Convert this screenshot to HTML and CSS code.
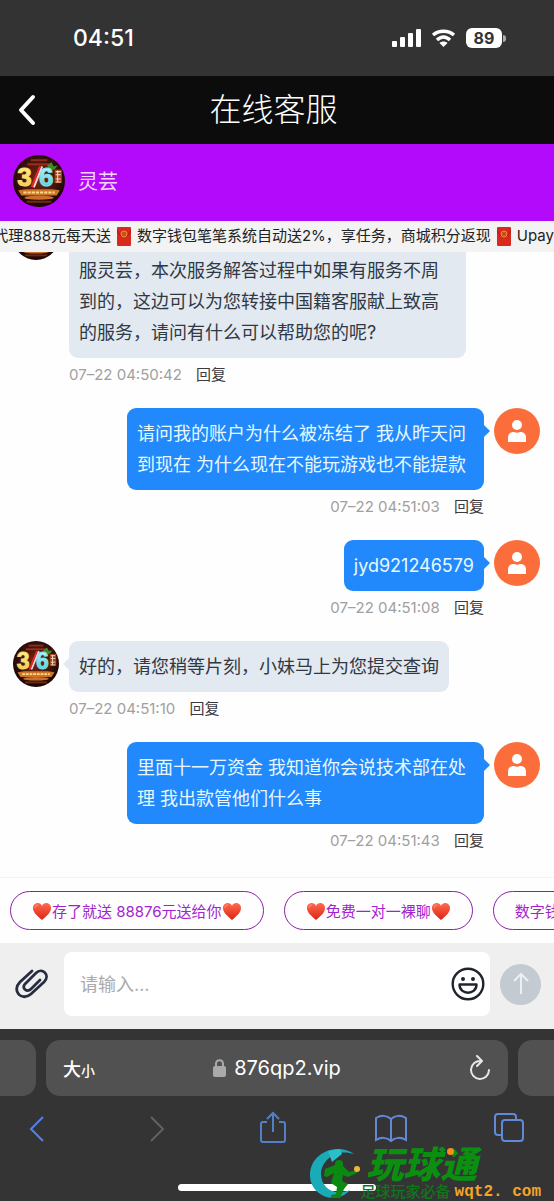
FILE: index.html
```html
<!DOCTYPE html>
<html lang="zh">
<head>
    <meta charset="UTF-8">
    <meta name="viewport" content="width=device-width, initial-scale=1.0">
    <title>在线客服</title>
    <link rel="stylesheet" href="styles.css">
</head>
<body>

    <!-- 公用图形 -->
    <svg class="defs" width="0" height="0" aria-hidden="true">
        <defs>
            <radialGradient id="logoBg" cx="50%" cy="45%" r="55%">
                <stop offset="0" stop-color="#7a2a12"/>
                <stop offset="0.6" stop-color="#43140c"/>
                <stop offset="1" stop-color="#170606"/>
            </radialGradient>
            <linearGradient id="gold" x1="0" y1="0" x2="0" y2="1">
                <stop offset="0" stop-color="#fff7b0"/>
                <stop offset="1" stop-color="#ecc43a"/>
            </linearGradient>
            <linearGradient id="ice" x1="0" y1="0" x2="0" y2="1">
                <stop offset="0" stop-color="#d8fbff"/>
                <stop offset="1" stop-color="#35c4dc"/>
            </linearGradient>
            <linearGradient id="heartBg" x1="0" y1="0" x2="0" y2="1">
                <stop offset="0" stop-color="#ff6a4d"/>
                <stop offset="1" stop-color="#dc2414"/>
            </linearGradient>
        </defs>
        <symbol id="logo" viewBox="0 0 50 50">
            <circle cx="25" cy="25" r="25" fill="url(#logoBg)"/>
            <path d="M17 5h16" stroke="#8a2c20" stroke-width="2"/>
            <path d="M14 9h22" stroke="#a02c20" stroke-width="2"/>
            <path d="M33 10l4-3 2 4 4-1-3 4-6 1z" fill="#3d8b2c"/>
            <path d="M28 11L20 31" stroke="#f2e0d8" stroke-width="2"/>
            <path d="M26 11L18 31" stroke="#e8262a" stroke-width="2"/>
            <text class="logo-num" x="4" y="30" fill="url(#gold)" stroke="#f7dc6a">3</text>
            <text class="logo-num" x="25" y="30" fill="url(#ice)" stroke="#7fe4f0">6</text>
            <path d="M40 14h7v13h-7z" fill="#a0401c"/>
            <path d="M41 16h5M41 19h5M43 15v11M41 23h5M41 26h5" stroke="#f3dcc0" stroke-width="1"/>
            <path d="M5 34l7-1h26l7 1-3 5H8z" fill="#cc7428"/>
            <path d="M10 36h30" stroke="#ffd68a" stroke-width="2" stroke-dasharray="3 1"/>
            <ellipse cx="25" cy="41" rx="14" ry="2" fill="#c8702c"/>
            <path d="M13 45h24" stroke="#6d2b12" stroke-width="2"/>
        </symbol>
        <symbol id="user" viewBox="0 0 46 46">
            <circle cx="23" cy="23" r="23" fill="#fb6e3b"/>
            <circle cx="23" cy="17" r="5" fill="#fff"/>
            <path d="M14 34v-4c0-4 2-6 6-6 2 1 4 1 6 0 4 0 6 2 6 6v4z" fill="#fff"/>
        </symbol>
        <symbol id="heart" viewBox="0 0 20 20">
            <path d="M10 19C4 14 1 11 1 7c0-5 7-7 9-2 2-5 9-3 9 2 0 4-3 7-9 12z" fill="url(#heartBg)"/>
            <path d="M3 7c0-2 1-3 3-3" fill="none" stroke="#ff9a82" stroke-width="1"/>
        </symbol>
        <symbol id="packet" viewBox="0 0 14 19">
            <rect width="14" height="19" rx="1" fill="#d9281e"/>
            <path d="M0 3c3 9 11 9 14 0" fill="none" stroke="#a51510" stroke-width="1"/>
            <circle cx="7" cy="7" r="3" fill="#c8501c" stroke="#f09030" stroke-width="1"/>
        </symbol>
    </svg>

    <div class="status">
        <span class="time">04:51</span>
        <div class="status-icons">
            <svg width="29" height="18" viewBox="0 0 29 18" fill="#fff">
                <rect x="0" y="12" width="5" height="6" rx="1"/>
                <rect x="8" y="8" width="5" height="10" rx="1"/>
                <rect x="16" y="4" width="5" height="14" rx="1"/>
                <rect x="24" y="0" width="5" height="18" rx="1"/>
            </svg>
            <svg width="25" height="18" viewBox="0 0 25 18">
                <path d="M2 6c6-5 15-5 21 0M6 11c4-4 9-4 13 0" fill="none" stroke="#fff" stroke-width="3.400"/>
                <path d="M8.500 14c2-2 6-2 8 0l-4 4z" fill="#fff"/>
            </svg>
            <div class="battery">89</div>
        </div>
    </div>

    <header class="title-bar">
        <button class="back" aria-label="返回">
            <svg width="20" height="32" viewBox="0 0 20 32"><path d="M16 3L4 16l12 13" fill="none" stroke="#fff" stroke-width="4" stroke-linecap="round" stroke-linejoin="round"/></svg>
        </button>
        <h1>在线客服</h1>
    </header>

    <div class="agent">
        <svg class="agent-logo"><use href="#logo"/></svg>
        <span>灵芸</span>
    </div>

    <div class="notice">
        <div class="notice-text">代理888元每天送<svg class="packet"><use href="#packet"/></svg>数字钱包笔笔系统自动送2%，享任务，商城积分返现<svg class="packet"><use href="#packet"/></svg>Upay</div>
    </div>

    <main class="chat">
        <div class="msg">
            <svg class="avatar"><use href="#logo"/></svg>
            <div class="msg-body">
                <div class="bubble"><br>服灵芸，本次服务解答过程中如果有服务不周到的，这边可以为您转接中国籍客服献上致高的服务，请问有什么可以帮助您的呢?</div>
                <div class="meta">07–22 04:50:42 <button class="reply">回复</button></div>
            </div>
        </div>
        <div class="msg mine">
            <svg class="avatar"><use href="#user"/></svg>
            <div class="msg-body">
                <div class="bubble">请问我的账户为什么被冻结了 我从昨天问到现在 为什么现在不能玩游戏也不能提款</div>
                <div class="meta">07–22 04:51:03 <button class="reply">回复</button></div>
            </div>
        </div>
        <div class="msg mine">
            <svg class="avatar"><use href="#user"/></svg>
            <div class="msg-body">
                <div class="bubble">jyd921246579</div>
                <div class="meta">07–22 04:51:08 <button class="reply">回复</button></div>
            </div>
        </div>
        <div class="msg">
            <svg class="avatar"><use href="#logo"/></svg>
            <div class="msg-body">
                <div class="bubble">好的，请您稍等片刻，小妹马上为您提交查询</div>
                <div class="meta">07–22 04:51:10 <button class="reply">回复</button></div>
            </div>
        </div>
        <div class="msg mine">
            <svg class="avatar"><use href="#user"/></svg>
            <div class="msg-body">
                <div class="bubble">里面十一万资金 我知道你会说技术部在处理 我出款管他们什么事</div>
                <div class="meta">07–22 04:51:43 <button class="reply">回复</button></div>
            </div>
        </div>
    </main>

    <div class="quick">
        <button class="chip"><svg class="heart"><use href="#heart"/></svg>存了就送 88876元送给你<svg class="heart"><use href="#heart"/></svg></button>
        <button class="chip"><svg class="heart"><use href="#heart"/></svg>免费一对一裸聊<svg class="heart"><use href="#heart"/></svg></button>
        <button class="chip">数字钱包</button>
    </div>

    <div class="composer">
        <button class="attach" aria-label="附件">
            <svg width="34" height="32" viewBox="0 0 34 32"><path d="M17 3L5 14c-9 9 2 20 11 12L29 14c7-7-2-15-8-9L10 16c-4 4 2 9 6 5l9-9" fill="none" stroke="#272d40" stroke-width="2.800" stroke-linecap="round" stroke-linejoin="round"/></svg>
        </button>
        <div class="field">
            <input type="text" placeholder="请输入..." aria-label="请输入">
            <button class="smile" aria-label="表情">
                <svg width="34" height="34" viewBox="0 0 34 34">
                    <circle cx="17" cy="17" r="15.300" fill="none" stroke="#20242e" stroke-width="2.400"/>
                    <circle cx="12" cy="12" r="2" fill="#20242e"/>
                    <circle cx="22" cy="12" r="2" fill="#20242e"/>
                    <path d="M8.500 17.500h17c0 11-17 11-17 0z" fill="none" stroke="#20242e" stroke-width="2.400" stroke-linejoin="round"/>
                </svg>
            </button>
        </div>
        <button class="send" aria-label="发送">
            <svg width="20" height="24" viewBox="0 0 20 24"><path d="M10 22V3M3 9l7-7 7 7" fill="none" stroke="#edf0f3" stroke-width="2"/></svg>
        </button>
    </div>

    <footer class="browser">
        <div class="tabs">
            <div class="tab-edge left"></div>
            <div class="address">
                <button class="text-size" aria-label="大小">大<small>小</small></button>
                <div class="url">
                    <svg width="13" height="18" viewBox="0 0 13 18"><path d="M3 8V5c0-5 7-5 7 0v3" fill="none" stroke="#aaa" stroke-width="2"/><rect y="7" width="13" height="11" rx="2" fill="#aaa"/></svg>
                    <span>876qp2.vip</span>
                </div>
                <button class="reload" aria-label="刷新">
                    <svg width="22" height="26" viewBox="0 0 22 26"><path d="M12 6a9 9 0 1 0 8 9M8 1l5 5-5 5" fill="none" stroke="#e8e8e8" stroke-width="2" stroke-linecap="round" stroke-linejoin="round"/></svg>
                </button>
            </div>
            <div class="tab-edge right"></div>
        </div>
        <nav class="tools">
            <button aria-label="后退"><svg width="30" height="34" viewBox="0 0 30 34"><path d="M21 6L9 18l12 12" stroke="#5280ed"/></svg></button>
            <button aria-label="前进"><svg width="30" height="34" viewBox="0 0 30 34"><path d="M12 6l12 12-12 12" stroke="#626262"/></svg></button>
            <button aria-label="分享"><svg width="32" height="34" viewBox="0 0 32 34"><path d="M11 11H7q-2 0-2 2v16q0 2 2 2h20q2 0 2-2V13q0-2-2-2h-4M17 21V2M11 8l6-6 6 6" stroke="#5280c8"/></svg></button>
            <button aria-label="书签"><svg width="32" height="34" viewBox="0 0 32 34"><path d="M16 8v22M16 8C12 4 6 4 1 7v22c5-3 11-3 15 1 4-4 10-4 15-1V7c-5-3-11-3-15 1z" stroke="#6289d8"/></svg></button>
            <button aria-label="标签页"><svg width="30" height="34" viewBox="0 0 30 34"><path d="M8 24H4q-3 0-3-3V6q0-3 3-3h15q3 0 3 3v3" stroke="#6289d8"/><rect x="8" y="9" width="21" height="21" rx="3" stroke="#6289d8"/></svg></button>
        </nav>
        <div class="home-line"></div>

        <!-- 水印 -->
        <div class="watermark">
            <svg width="52" height="54" viewBox="0 0 52 54">
                <path d="M45 7C29-5 1 5 1 28c0 21 26 31 40 15C26 50 12 41 12 27 12 13 28 1 45 7z" fill="#19abb8"/>
                <path d="M19 4l4 11 10-8-2-5z" fill="#2bbfca"/>
                <circle cx="30" cy="17" r="4" fill="#0b8a12"/>
                <path d="M16 22l10-4 8 1 6 6 8-2v3l-9 4-5-2-1 6 6 3-4 5-4 9h-9v-3l5-1 1-7-6-4 3-10-7 4-3-1z" fill="#0b8a12"/>
                <circle cx="48" cy="22" r="3" fill="#efb73e"/>
            </svg>
            <div class="mark-text">
                <div class="mark-name">玩球通<i></i></div>
                <div class="mark-sub">足球玩家必备<span>wqt2. com</span></div>
            </div>
        </div>
    </footer>

</body>
</html>
```
FILE: styles.css
```css
* {
    box-sizing: border-box;
}

body {
    margin: 0;
    height: 100vh;
    display: flex;
    flex-direction: column;
    overflow: hidden;
    background: #fefefe;
    color: #303844;
    font-family: Inter, "Noto Sans CJK SC", sans-serif;
    font-size: 15px;
}

button {
    border: none;
    padding: 0;
    background: none;
    color: inherit;
    font: inherit;
    cursor: pointer;
}

svg {
    display: block;
    flex-shrink: 0;
}

.defs {
    position: absolute;
}

.logo-num {
    font-family: "Liberation Sans", sans-serif;
    font-size: 25px;
    font-weight: bold;
}

/* 状态栏 */
.status {
    height: 76px;
    flex-shrink: 0;
    display: flex;
    align-items: center;
    justify-content: space-between;
    padding: 0 52px 0 73px;
    background: #333;
    color: #fff;
}

.time {
    font-size: 23px;
    font-weight: 500;
}

.status-icons {
    display: flex;
    align-items: center;
    gap: 10px;
}

.battery {
    position: relative;
    width: 36px;
    height: 20px;
    border-radius: 6px;
    background: #fff;
    color: #333;
    font-size: 16px;
    font-weight: 700;
    line-height: 20px;
    text-align: center;
}

.battery::after {
    content: "";
    position: absolute;
    left: 37px;
    top: 7px;
    width: 3px;
    height: 7px;
    border-radius: 0 3px 3px 0;
    background: #aaa;
}

/* 标题 */
.title-bar {
    height: 68px;
    flex-shrink: 0;
    display: grid;
    grid-template-columns: 40px 1fr 40px;
    align-items: center;
    padding: 0 24px 0 17px;
    background: #0c0c0c;
    color: #fff;
}

.title-bar h1 {
    margin: 0;
    font-size: 32px;
    font-weight: 300;
    line-height: 40px;
    text-align: center;
}

.agent {
    height: 77px;
    flex-shrink: 0;
    display: flex;
    align-items: center;
    gap: 13px;
    padding: 0 13px 4px;
    background: #b30afb;
    color: #f9d5fb;
    font-size: 20px;
}

.agent-logo {
    width: 52px;
    height: 52px;
}

.notice {
    height: 31px;
    flex-shrink: 0;
    display: flex;
    justify-content: flex-end;
    overflow: hidden;
    background: #f3f3f3;
    color: #222;
    line-height: 29px;
    white-space: nowrap;
}

.notice-text {
    flex-shrink: 0;
}

.packet {
    display: inline-block;
    width: 14px;
    height: 19px;
    margin: 0 6px;
    vertical-align: middle;
}

/* 聊天记录 */
.chat {
    flex: 1;
    min-height: 0;
    display: flex;
    flex-direction: column;
    justify-content: flex-end;
    gap: 16px;
    padding: 0 14px 19px 13px;
    overflow: hidden;
}

.msg {
    display: flex;
    gap: 10px;
    padding-right: 74px;
}

.msg.mine {
    flex-direction: row-reverse;
    padding-right: 0;
    padding-left: 114px;
}

.avatar {
    width: 46px;
    height: 46px;
}

.msg-body {
    display: flex;
    flex-direction: column;
    align-items: flex-start;
}

.mine .msg-body {
    align-items: flex-end;
}

.bubble {
    position: relative;
    padding: 10px;
    border-radius: 9px;
    background: #e2e9f1;
    font-size: 18px;
    line-height: 31px;
}

.mine .bubble {
    background: #2189fb;
    color: #e8f8ff;
}

.bubble::before {
    content: "";
    position: absolute;
    top: 17px;
    left: -6px;
    border: 6px solid transparent;
    border-left: none;
    border-right-color: #e2e9f1;
}

.mine .bubble::before {
    left: auto;
    right: -6px;
    border: 6px solid transparent;
    border-right: none;
    border-left-color: #2189fb;
}

.meta {
    height: 34px;
    line-height: 34px;
    color: #a0a0a0;
}

.reply {
    margin-left: 10px;
    color: #3a3a40;
}

/* 快捷语 */
.quick {
    flex-shrink: 0;
    display: flex;
    gap: 20px;
    padding: 13px 0 13px 10px;
    border-top: 1px solid #f3f3f3;
    overflow: hidden;
}

.chip {
    height: 39px;
    flex-shrink: 0;
    display: flex;
    align-items: center;
    padding: 0 21px;
    border: 1px solid #8a1fa8;
    border-radius: 20px;
    color: #a322cf;
}

.heart {
    width: 20px;
    height: 20px;
}

/* 输入区 */
.composer {
    flex-shrink: 0;
    display: flex;
    align-items: center;
    gap: 10px;
    padding: 9px 13px 13px 15px;
    background: #efefef;
}

.attach {
    width: 39px;
}

.field {
    flex: 1;
    height: 64px;
    display: flex;
    align-items: center;
    padding: 0 5px 0 16px;
    border-radius: 8px;
    background: #fff;
}

.field input {
    flex: 1;
    min-width: 0;
    border: none;
    padding: 0;
    outline: none;
    background: none;
    font: inherit;
    font-size: 18px;
}

.field input::placeholder {
    color: #aaa;
}

.send {
    width: 41px;
    height: 41px;
    display: flex;
    align-items: center;
    justify-content: center;
    border-radius: 50%;
    background: #c3cad2;
}

/* 浏览器底栏 */
.browser {
    position: relative;
    height: 172px;
    flex-shrink: 0;
    padding-top: 11px;
    background: #343434;
    color: #fff;
}

.tabs {
    display: flex;
    gap: 10px;
}

.tab-edge,
.address {
    height: 56px;
    background: #515151;
}

.tab-edge {
    width: 36px;
}

.left {
    border-radius: 0 14px 14px 0;
}

.right {
    border-radius: 14px 0 0 14px;
}

.address {
    flex: 1;
    display: grid;
    grid-template-columns: 1fr auto 1fr;
    align-items: center;
    padding: 0 17px;
    border-radius: 14px;
}

.text-size {
    justify-self: start;
    font-size: 18px;
    font-weight: 500;
}

.text-size small {
    font-size: 14px;
}

.reload {
    justify-self: end;
}

.url {
    display: flex;
    align-items: center;
    gap: 8px;
    font-size: 20px;
}

.tools {
    display: flex;
    justify-content: space-between;
    padding: 15px 30px 0 22px;
}

.tools path,
.tools rect {
    fill: none;
    stroke-width: 2;
}

.home-line {
    position: absolute;
    bottom: 10px;
    left: 50%;
    width: 198px;
    height: 7px;
    margin-left: -99px;
    border-radius: 4px;
    background: #fff;
}

.watermark {
    position: absolute;
    right: 13px;
    bottom: 0;
    display: flex;
    align-items: flex-start;
}

.mark-name {
    position: relative;
    padding-left: 6px;
    color: #0b8f10;
    font-size: 37px;
    font-style: italic;
    font-weight: 900;
    line-height: 36px;
}

.mark-name i {
    position: absolute;
    left: 86px;
    top: 1px;
    width: 7px;
    height: 7px;
    border-radius: 50%;
    background: #ff8a1c;
}

.mark-sub {
    display: flex;
    align-items: center;
    color: #11751b;
    font-weight: 500;
    line-height: 18px;
}

.mark-sub span {
    margin-left: 4px;
    color: #f3a526;
    font-family: "Liberation Mono", monospace;
    font-size: 16px;
    font-weight: bold;
}
```
